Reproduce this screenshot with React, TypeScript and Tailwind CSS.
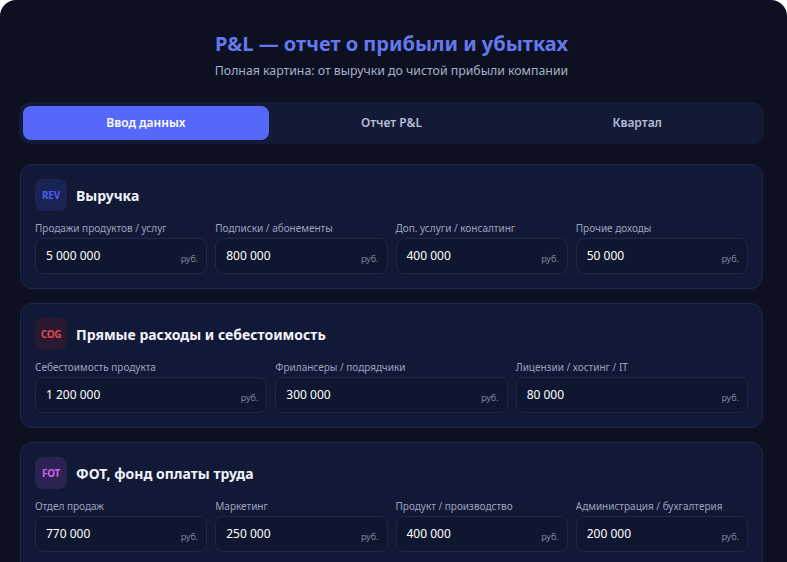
import React, { useState } from 'react';

type Field = { label: string; value: string };

interface SectionProps {
  code: string;
  codeClass: string;
  iconClass: string;
  title: string;
  cols: 3 | 4;
  fields: Field[];
}

const Section: React.FC<SectionProps> = ({ code, codeClass, iconClass, title, cols, fields }) => {
  return (
    <div className="rounded-xl border border-[#1c2748] bg-[#111936] px-[14px] pt-[14px] pb-[14px]">
      <div className="flex items-center gap-[9px] mb-[10px]">
        <div className={`w-[32px] h-[32px] rounded-lg flex items-center justify-center ${iconClass}`}>
          <span className={`text-[10px] font-bold tracking-tight ${codeClass}`}>{code}</span>
        </div>
        <h2 className="text-[14px] font-bold text-[#f1f3fb]">{title}</h2>
      </div>
      <div className={`grid gap-x-2 gap-y-2 ${cols === 4 ? 'grid-cols-4' : 'grid-cols-3'}`}>
        {fields.map((f) => (
          <div key={f.label}>
            <div className="text-[10px] text-[#9aa3bd] mb-[3px] leading-[14px]">{f.label}</div>
            <div className="relative h-[36px] rounded-lg border border-[#1e2847] bg-[#0f1630] flex items-center px-[10px]">
              <span className="text-[12px] text-white">{f.value}</span>
              <span className="absolute right-[8px] bottom-[8px] text-[9px] text-[#7c859e]">руб.</span>
            </div>
          </div>
        ))}
      </div>
    </div>
  );
};

const tabs = ['Ввод данных', 'Отчет P&L', 'Квартал'];

export default function App() {
  const [tab, setTab] = useState(0);

  return (
    <div className="bg-white min-h-screen" style={{ fontFamily: '"Noto Sans", "Open Sans", sans-serif' }}>
      <div className="min-h-screen rounded-2xl bg-[#0c1020] pl-[19px] pr-[23px] pt-[30px] pb-6">
        {/* Header */}
        <div className="text-center">
          <h1 className="text-[20px] font-bold text-[#6678ee] leading-[28px]">P&amp;L — отчет о прибыли и убытках</h1>
          <p className="text-[12.3px] text-[#a9b0c8] mt-[4px]">Полная картина: от выручки до чистой прибыли компании</p>
        </div>

        {/* Tabs */}
        <div className="mt-[22px] grid grid-cols-3 gap-0 rounded-xl bg-[#121a36] p-[4px]">
          {tabs.map((t, i) => (
            <button
              key={t}
              onClick={() => setTab(i)}
              className={`h-[34px] rounded-lg text-[12px] font-semibold ${
                tab === i ? 'bg-[#5568fa] text-white' : 'text-[#b6bdd4]'
              }`}
            >
              {t}
            </button>
          ))}
        </div>

        <div className="mt-[20px] flex flex-col gap-[14px] px-[1px]">
          <Section
            code="REV"
            codeClass="text-[#4c5ff2]"
            iconClass="bg-[#1a2454]"
            title="Выручка"
            cols={4}
            fields={[
              { label: 'Продажи продуктов / услуг', value: '5 000 000' },
              { label: 'Подписки / абонементы', value: '800 000' },
              { label: 'Доп. услуги / консалтинг', value: '400 000' },
              { label: 'Прочие доходы', value: '50 000' },
            ]}
          />
          <Section
            code="COG"
            codeClass="text-[#e5484d]"
            iconClass="bg-[#2a1a30]"
            title="Прямые расходы и себестоимость"
            cols={3}
            fields={[
              { label: 'Себестоимость продукта', value: '1 200 000' },
              { label: 'Фрилансеры / подрядчики', value: '300 000' },
              { label: 'Лицензии / хостинг / IT', value: '80 000' },
            ]}
          />
          <Section
            code="FOT"
            codeClass="text-[#d35ee8]"
            iconClass="bg-[#2a2352]"
            title="ФОТ, фонд оплаты труда"
            cols={4}
            fields={[
              { label: 'Отдел продаж', value: '770 000' },
              { label: 'Маркетинг', value: '250 000' },
              { label: 'Продукт / производство', value: '400 000' },
              { label: 'Администрация / бухгалтерия', value: '200 000' },
              { label: 'Налоги на ФОТ', value: '486 000' },
            ]}
          />
        </div>
      </div>
    </div>
  );
}
